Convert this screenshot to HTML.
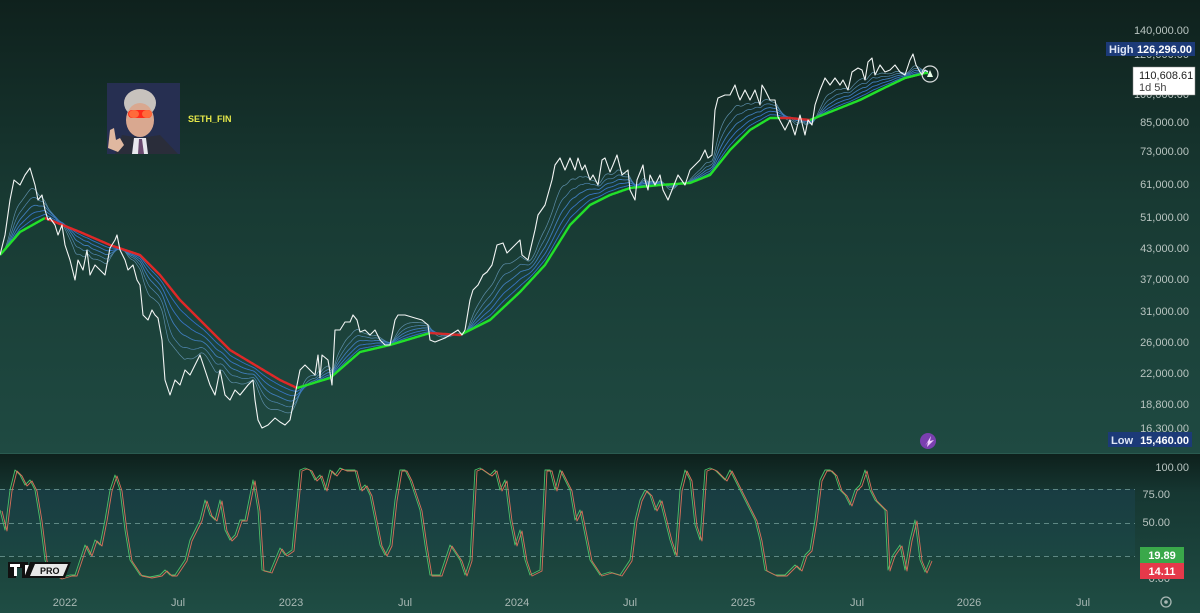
<!DOCTYPE html>
<html><head><meta charset="utf-8"><style>
html,body{margin:0;padding:0;width:1200px;height:613px;overflow:hidden;background:#16302a;font-family:"Liberation Sans",sans-serif}
svg{display:block}
</style></head><body>
<svg id="s" width="1200" height="613" xmlns="http://www.w3.org/2000/svg">
<defs>
<linearGradient id="bg" x1="0" y1="0" x2="0" y2="1">
<stop offset="0" stop-color="#0f211d"/><stop offset="0.45" stop-color="#183a33"/><stop offset="1" stop-color="#1f4a42"/>
</linearGradient>
<linearGradient id="bg2" x1="0" y1="0" x2="0" y2="1">
<stop offset="0" stop-color="#0d1f1b"/><stop offset="0.25" stop-color="#163732"/><stop offset="1" stop-color="#1f4d44"/>
</linearGradient>
<linearGradient id="band" x1="0" y1="0" x2="0" y2="1">
<stop offset="0" stop-color="#1a3f4a" stop-opacity="0.7"/><stop offset="1" stop-color="#1c4a4a" stop-opacity="0.5"/>
</linearGradient>
</defs>
<rect x="0" y="0" width="1200" height="453" fill="url(#bg)"/>
<rect x="0" y="453" width="1200" height="160" fill="url(#bg2)"/>
<line x1="0" y1="453.5" x2="1200" y2="453.5" fill="none" stroke="#2a5a50" stroke-width="1"/>
<rect x="0" y="489" width="1135" height="67" fill="url(#band)"/>
<g stroke="#6f9a95" stroke-width="1" stroke-dasharray="5,4" opacity="0.8">
<line x1="0" y1="489.5" x2="1135" y2="489.5"/><line x1="0" y1="523.5" x2="1135" y2="523.5"/><line x1="0" y1="556.5" x2="1135" y2="556.5"/>
</g>
<g id="ribbon"></g>
<g id="stoch"></g>
<!-- avatar -->
<rect x="107" y="83" width="73" height="71" fill="#1e2a4a"/>
<rect x="107" y="83" width="73" height="71" fill="#2b3456" opacity="0.6"/>
<ellipse cx="140" cy="103" rx="16" ry="14" fill="#c7c2bd"/>
<ellipse cx="140" cy="120" rx="14" ry="17" fill="#d9a890"/>
<path d="M115 154 L122 135 L140 138 L160 135 L178 154 Z" fill="#2a2d3a"/>
<path d="M134 138 L146 138 L148 154 L132 154 Z" fill="#e8e8ee"/>
<path d="M139 139 L142 139 L144 154 L138 154 Z" fill="#6a4a70"/>
<rect x="128" y="110" width="24" height="8" rx="4" fill="#ff2a1a"/>
<ellipse cx="134" cy="114" rx="5" ry="4" fill="#ff6a3a"/><ellipse cx="147" cy="114" rx="5" ry="4" fill="#ff6a3a"/>
<path d="M108 148 L110 130 L114 128 L116 140 L120 138 L124 145 L118 152 Z" fill="#e0b8a0"/>
<text x="188" y="122" font-size="9" font-weight="bold" fill="#e6e84a">SETH_FIN</text>
<!-- current marker -->
<circle cx="930" cy="74" r="8" fill="none" stroke="#d8dcdc" stroke-width="1.2"/>
<path d="M927 77 L930 70 L933 77 Z" fill="#e8ffe8"/>
<!-- purple icon -->
<circle cx="928" cy="441" r="8" fill="#7a3fb0"/>
<path d="M925 446 L931 436 L930 441 L934 440 L927 447 L928 442 Z" fill="#f0d0ff"/>
<!-- TV pro logo -->
<g transform="translate(8,562)">
<path d="M0 0 H20 V16 H14 V6 H8 V16 H0 Z" fill="#111"/>
<path d="M2 2 H12 V5 H9 V14 H6 V5 H2 Z" fill="#fff"/>
<path d="M17 3 H24 L17 14 Z" fill="#fff"/>
<path d="M22 0 H63 L57 16 H16 Z" fill="#111"/>
<path d="M27 2 H60 L55 14 H22 Z" fill="#e8e8e8"/>
<text x="32" y="12" font-size="9" font-weight="bold" fill="#111">PRO</text>
</g>
<!-- price axis -->
<g font-size="11" fill="#b8c4c0" text-anchor="end">
<text x="1189" y="34">140,000.00</text>
<text x="1189" y="58">120,000.00</text>
<text x="1189" y="98">100,000.00</text>
<text x="1189" y="126">85,000.00</text>
<text x="1189" y="155">73,000.00</text>
<text x="1189" y="188">61,000.00</text>
<text x="1189" y="221">51,000.00</text>
<text x="1189" y="252">43,000.00</text>
<text x="1189" y="283">37,000.00</text>
<text x="1189" y="315">31,000.00</text>
<text x="1189" y="346">26,000.00</text>
<text x="1189" y="377">22,000.00</text>
<text x="1189" y="408">18,800.00</text>
<text x="1189" y="432">16,300.00</text>
<text x="1189" y="471">100.00</text>
<text x="1170" y="498">75.00</text>
<text x="1170" y="526">50.00</text>
<text x="1170" y="555">25.00</text>
<text x="1170" y="582">0.00</text>
</g>
<rect x="1106" y="42" width="89" height="14" fill="#1c3a78"/>
<text x="1109" y="53" font-size="11" font-weight="bold" fill="#dfe6f5">High</text>
<text x="1192" y="53" font-size="11" font-weight="bold" fill="#ffffff" text-anchor="end">126,296.00</text>
<rect x="1133" y="67" width="62" height="28" fill="#ffffff" stroke="#888" stroke-width="0.5"/>
<text x="1139" y="79" font-size="11" fill="#222">110,608.61</text>
<text x="1139" y="91" font-size="11" fill="#444">1d 5h</text>
<rect x="1108" y="432" width="84" height="15" fill="#1c3a78"/>
<text x="1111" y="444" font-size="11" font-weight="bold" fill="#dfe6f5">Low</text>
<text x="1189" y="444" font-size="11" font-weight="bold" fill="#ffffff" text-anchor="end">15,460.00</text>
<rect x="1140" y="547" width="44" height="16" fill="#3aa84a"/>
<text x="1162" y="559" font-size="11" font-weight="bold" fill="#fff" text-anchor="middle">19.89</text>
<rect x="1140" y="563" width="44" height="16" fill="#e5394a"/>
<text x="1162" y="575" font-size="11" font-weight="bold" fill="#fff" text-anchor="middle">14.11</text>
<!-- time axis -->
<g font-size="11" fill="#a8b8b4" text-anchor="middle">
<text x="65" y="606">2022</text><text x="178" y="606">Jul</text><text x="291" y="606">2023</text><text x="405" y="606">Jul</text>
<text x="517" y="606">2024</text><text x="630" y="606">Jul</text><text x="743" y="606">2025</text><text x="857" y="606">Jul</text>
<text x="969" y="606">2026</text><text x="1083" y="606">Jul</text>
</g>
<circle cx="1166" cy="602" r="5" fill="none" stroke="#a8b8b4" stroke-width="1.3"/><circle cx="1166" cy="602" r="1.8" fill="#a8b8b4"/>
</svg>
<script>
var P=[[0,255],[5,235],[10,200],[14,180],[20,185],[25,175],[30,168],[35,185],[38,200],[42,195],[45,210],[48,220],[50,218],[55,225],[58,235],[62,225],[65,245],[70,260],[75,280],[78,260],[83,270],[87,250],[90,275],[95,265],[100,270],[105,275],[110,248],[115,240],[117,235],[120,250],[125,260],[128,270],[133,265],[137,280],[140,285],[143,315],[148,320],[152,310],[155,315],[158,318],[162,340],[165,380],[170,395],[175,380],[180,385],[185,370],[190,375],[195,365],[200,355],[205,370],[210,385],[215,395],[220,370],[225,395],[230,400],[235,390],[240,395],[248,385],[253,380],[255,400],[258,420],[262,428],[268,425],[275,418],[280,422],[285,425],[290,420],[295,395],[300,370],[305,365],[310,370],[315,375],[318,355],[320,378],[322,355],[328,360],[332,385],[335,330],[340,330],[345,322],[350,322],[353,315],[357,320],[360,332],[365,330],[370,335],[375,330],[380,340],[385,345],[390,345],[395,320],[398,315],[405,315],[415,318],[422,320],[428,325],[430,340],[435,342],[445,338],[450,335],[458,330],[462,335],[465,330],[470,300],[473,290],[478,285],[483,275],[487,272],[492,265],[497,245],[503,243],[507,253],[512,248],[520,240],[522,255],[528,260],[535,230],[538,215],[545,205],[552,180],[555,165],[560,158],[565,170],[570,158],[575,170],[578,158],[582,170],[585,165],[590,180],[593,175],[598,185],[602,160],[605,158],[610,172],[613,165],[617,155],[622,175],[628,170],[630,190],[635,200],[637,180],[643,165],[645,180],[648,190],[650,175],[655,185],[660,175],[663,190],[668,200],[672,190],[678,175],[685,185],[690,170],[695,165],[700,160],[705,150],[708,158],[712,155],[715,110],[718,98],[725,95],[730,95],[735,85],[738,95],[740,100],[745,90],[750,100],[755,90],[760,105],[762,85],[765,90],[770,100],[775,100],[778,117],[785,130],[790,120],[795,135],[800,115],[805,135],[808,120],[812,125],[815,105],[820,90],[825,78],[830,85],[835,78],[840,85],[843,80],[848,90],[852,72],[858,68],[862,70],[865,80],[868,62],[872,58],[875,75],[880,65],[885,72],[890,70],[895,65],[900,72],[905,75],[910,60],[913,54],[916,65],[920,72],[922,75],[925,70],[928,72]];
var B=[[0,255],[20,232],[45,218],[80,232],[110,245],[140,255],[160,275],[180,300],[200,320],[230,350],[255,365],[280,380],[297,388],[330,378],[360,352],[390,345],[430,333],[460,335],[490,320],[520,292],[545,265],[570,225],[590,205],[610,195],[630,188],[660,185],[690,183],[710,175],[730,150],[750,130],[770,118],[790,118],[810,120],[840,108],[860,100],[880,90],[905,78],[925,73]];
function interp(A,x){for(var i=1;i<A.length;i++){if(x<=A[i][0]){var a=A[i-1],b=A[i];return a[1]+(b[1]-a[1])*(x-a[0])/(b[0]-a[0]);}}return A[A.length-1][1];}
var N=929,pr=[],bs=[];for(var x=0;x<N;x++){pr.push(interp(P,x));bs.push(interp(B,x));}
var ns="http://www.w3.org/2000/svg",g=document.getElementById('ribbon');
function pl(pts,stroke,w,par){var e=document.createElementNS(ns,'polyline');e.setAttribute('points',pts);e.setAttribute('fill','none');e.setAttribute('stroke',stroke);e.setAttribute('stroke-width',w);e.setAttribute('stroke-linejoin','round');(par||g).appendChild(e);}
var fr=[0.75,0.6,0.45,0.3,0.15],cols=['#5d8ea8','#4f86b0','#3f7cb8','#3774c0','#3070c4'];
for(var k=0;k<fr.length;k++){var a=2/(14+k*4),s=pr[0],pts='';for(var x=0;x<N;x++){s=s+a*(pr[x]-s);var y=bs[x]+(s-bs[x])*fr[k];y=Math.max(Math.min(y,bs[x]+55),bs[x]-60);pts+=x+','+y.toFixed(1)+' ';}pl(pts,cols[k],k<2?0.7:0.9);}
var segs=[[0,45,'#22e02a'],[45,297,'#e02828'],[297,430,'#22e02a'],[430,462,'#d42a2a'],[462,780,'#22e02a'],[780,810,'#d42a2a'],[810,928,'#22e02a']];
segs.forEach(function(sg){var pts='';for(var x=sg[0];x<=sg[1];x++)pts+=x+','+bs[x].toFixed(1)+' ';pl(pts,sg[2],2.4);});
var pts='';P.forEach(function(p){pts+=p[0]+','+p[1]+' ';});pl(pts,'#f2f5f4',1.1);
var S=[[0,510],[5,530],[10,490],[15,470],[20,475],[25,485],[30,480],[35,490],[40,520],[45,560],[50,575],[55,575],[60,578],[70,575],[75,575],[80,560],[85,545],[90,555],[95,540],[100,545],[105,520],[110,490],[115,475],[120,490],[125,530],[130,560],[140,575],[150,577],[160,575],[165,570],[170,575],[175,575],[185,560],[190,540],[200,520],[205,500],[210,515],[215,520],[220,500],[225,530],[230,540],[235,535],[240,520],[245,520],[250,495],[253,480],[258,510],[262,570],[270,572],[275,560],[280,548],[285,555],[292,550],[295,520],[300,470],[305,468],[310,470],[315,480],[320,475],[325,490],[330,470],[335,475],[340,468],[345,470],[350,470],[355,470],[360,490],[365,485],[370,495],[375,520],[380,545],[385,555],[390,545],[395,500],[400,470],[405,470],[410,480],[420,510],[425,545],[430,575],[440,575],[445,560],[450,545],[460,560],[465,575],[470,560],[475,470],[480,468],[490,475],[495,470],[500,490],[505,480],[510,520],[515,545],[520,530],[525,560],[530,575],[540,570],[545,470],[550,470],[555,490],[560,470],[565,480],[570,490],[575,520],[580,510],[590,560],[600,575],[610,572],[620,575],[630,560],[635,520],[640,500],[645,490],[650,495],[655,510],[660,500],[665,520],[670,540],[675,555],[680,490],[685,470],[690,480],[695,525],[700,540],[705,470],[710,468],[715,470],[720,475],[725,480],[730,470],[735,480],[740,490],[745,500],[750,510],[755,520],[760,540],[765,570],[775,575],[785,575],[795,565],[800,570],[805,555],[810,550],[815,520],[820,480],[825,470],[830,470],[835,475],[840,490],[845,495],[850,505],[855,490],[860,485],[865,470],[870,490],[875,500],[880,505],[885,510],[888,570],[893,555],[900,545],[905,570],[910,540],[915,520],[920,560],[925,572],[930,560]];
var sg=document.getElementById('stoch'),p1='',p2='';S.forEach(function(p){p1+=p[0]+','+p[1]+' ';p2+=(p[0]+2)+','+(p[1]+1)+' ';});
pl(p1,'#4cc06a',0.9,sg);pl(p2,'#d8705a',0.9,sg);
</script>
</body></html>
